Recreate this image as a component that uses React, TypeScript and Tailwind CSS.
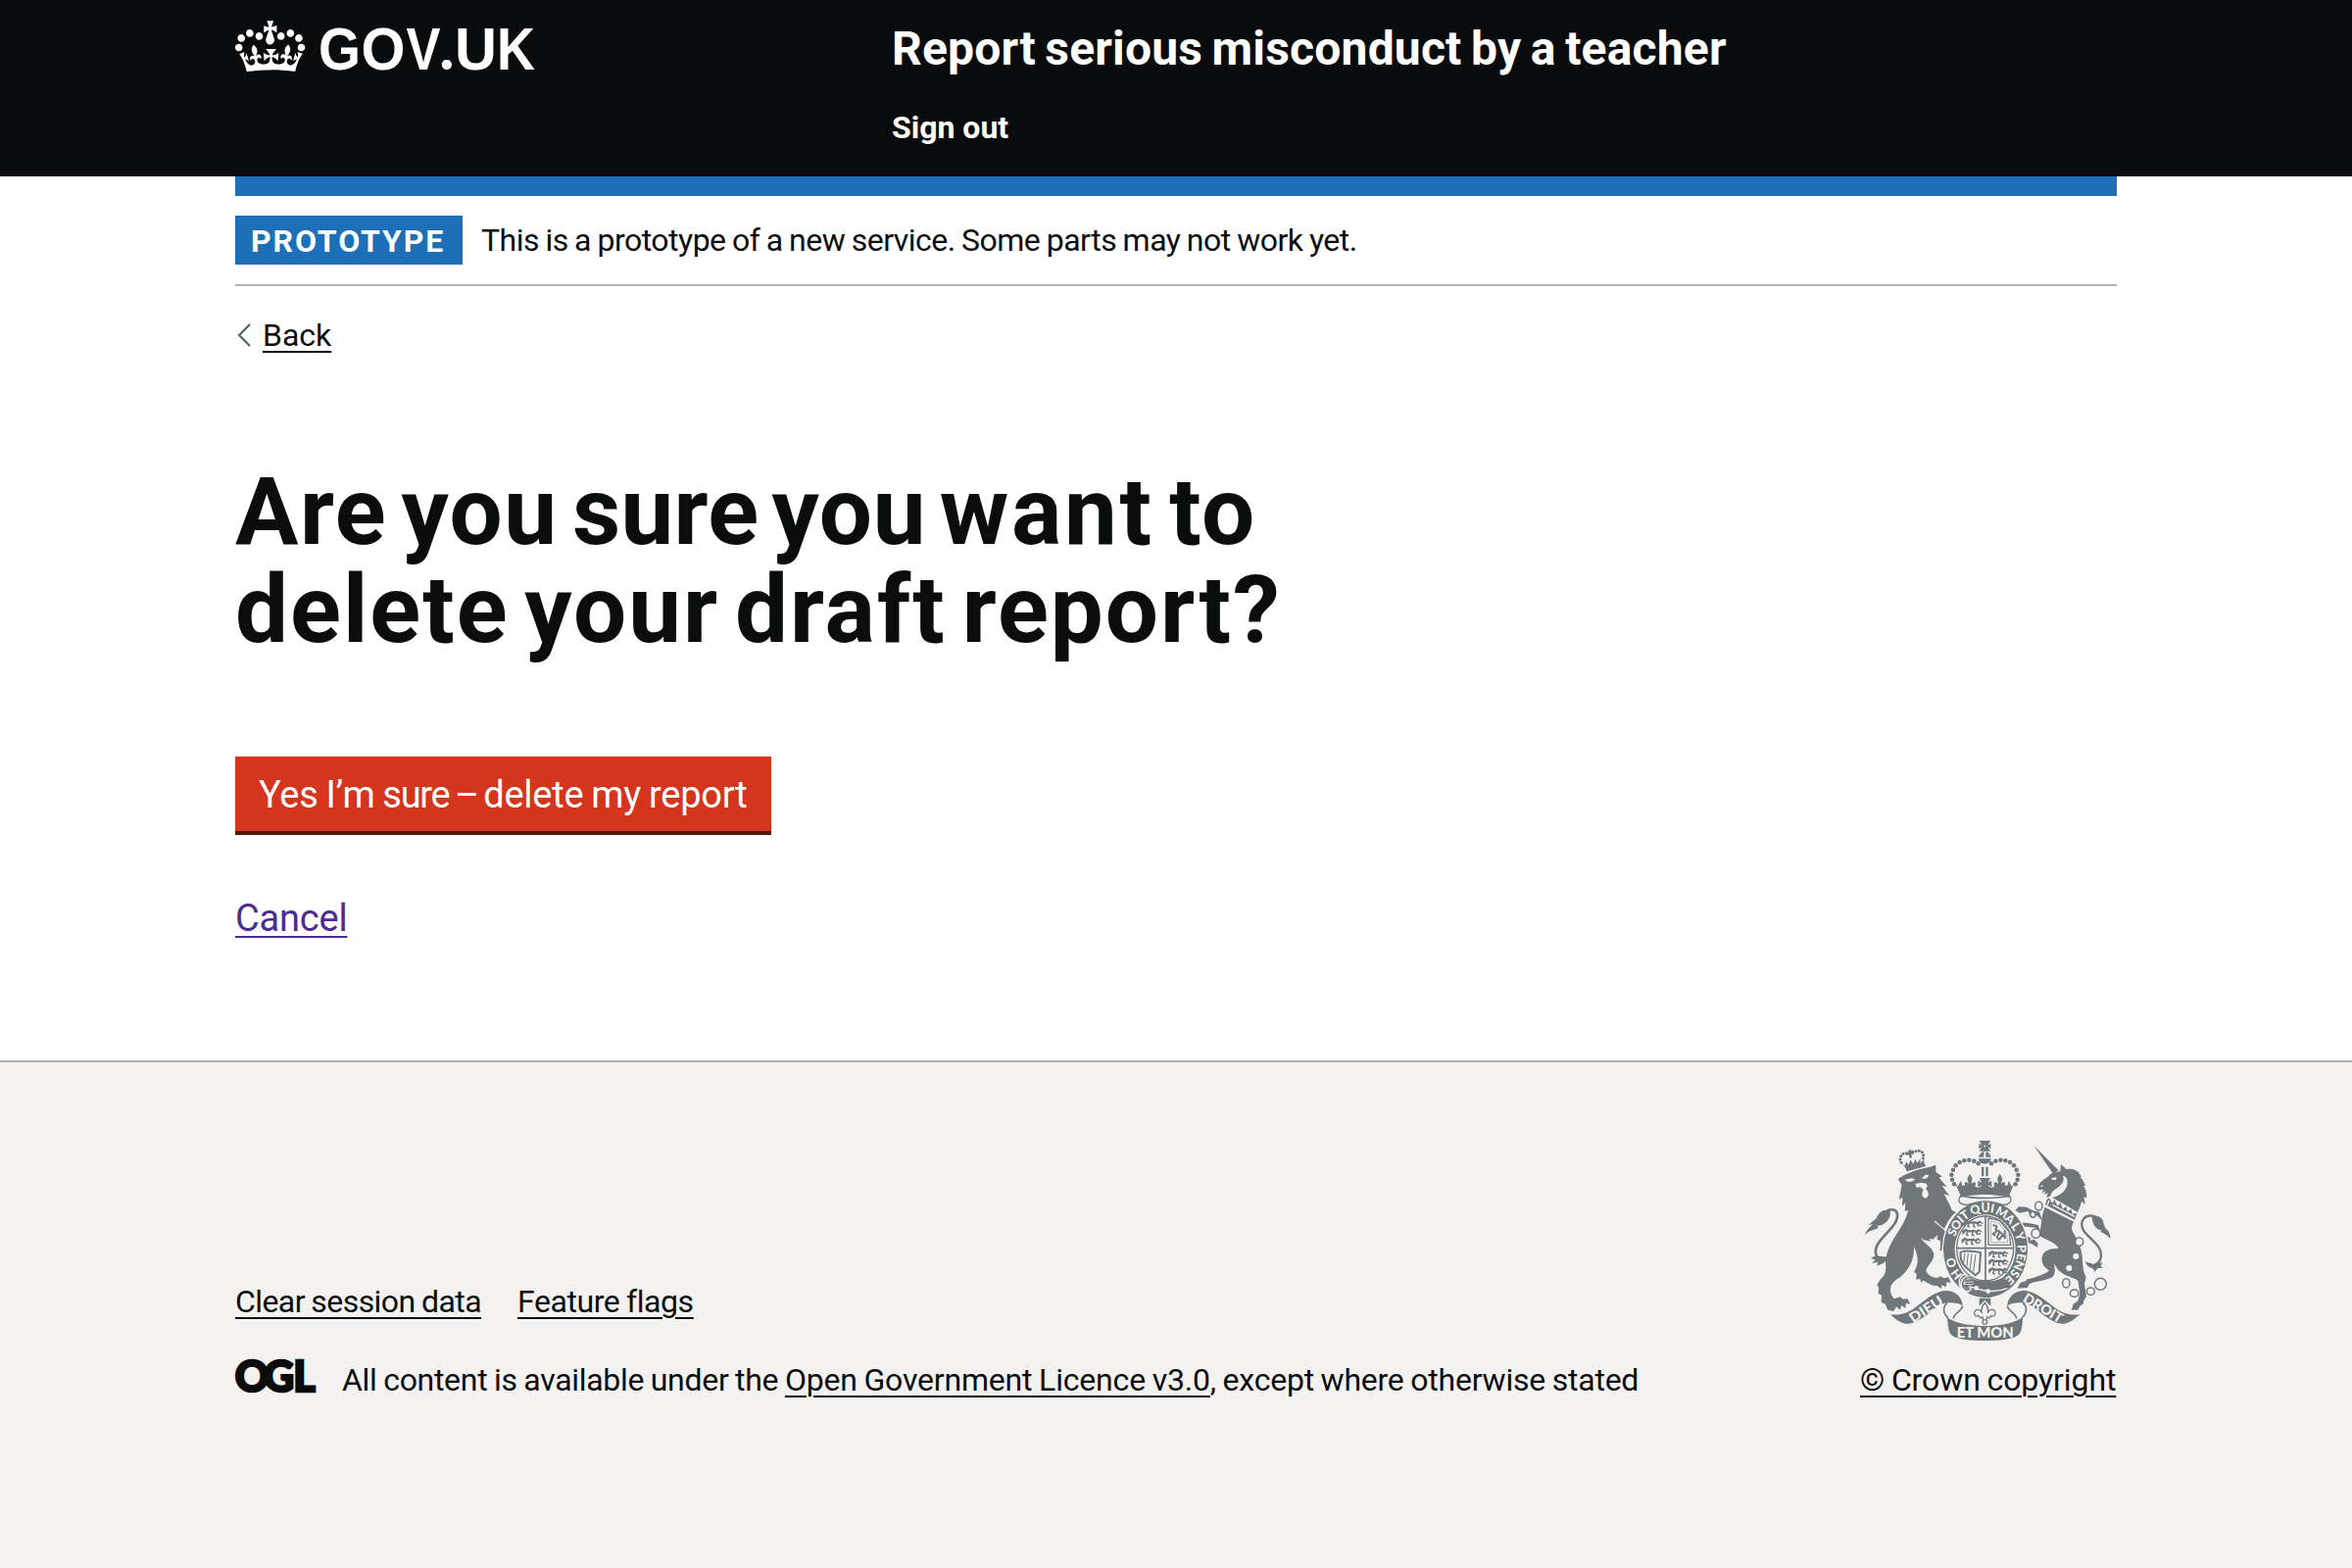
import type { ReactNode } from "react";

const GREY = "#6f777b";
const PALE = "#f3f2f1";

/** Crown and wordmark shown at the left of the header. */
function Logo() {
  return (
    <svg className="block h-[64px] w-[310px] overflow-visible" viewBox="0 0 310 64" fill="white" aria-label="GOV.UK">
      <g transform="scale(2)">
        <path d="M6.7 12.2c1 .4 2.1-.1 2.5-1s-.1-2.1-1-2.5c-1-.4-2.1.1-2.5 1-.4 1 0 2.1 1 2.5m-4.3 2.5c1 .4 2.1-.1 2.5-1s-.1-2.1-1-2.5c-1-.4-2.1.1-2.5 1-.5 1 0 2.1 1 2.5m-1.3 4.8c1 .4 2.1-.1 2.5-1 .4-1-.1-2.1-1-2.5-1-.4-2.1.1-2.5 1-.4 1 0 2.1 1 2.5m10.4-5.8c1 .4 2.1-.1 2.5-1s-.1-2.1-1-2.5c-1-.4-2.1.1-2.5 1s0 2.1 1 2.5m17.4-1.5c-1 .4-2.1-.1-2.5-1s.1-2.1 1-2.5c1-.4 2.1.1 2.5 1 .5 1 0 2.1-1 2.5m4.3 2.5c-1 .4-2.1-.1-2.5-1s.1-2.1 1-2.5c1-.4 2.1.1 2.5 1 .5 1 0 2.1-1 2.5m1.3 4.8c-1 .4-2.1-.1-2.5-1-.4-1 .1-2.1 1-2.5 1-.4 2.1.1 2.5 1 .4 1 0 2.1-1 2.5m-10.4-5.8c-1 .4-2.1-.1-2.5-1s.1-2.1 1-2.5c1-.4 2.1.1 2.5 1s0 2.1-1 2.5m-5.3-4.9 2.4 1.3V6.5l-2.4.8c-.1-.1-.1-.2-.2-.2s1-3 1-3h-3.4l1 3c-.1.1-.2.1-.2.2-.1.1-2.4-.7-2.4-.7v3.5L17 8.8c-.1.1 0 .2.1.3l-1.4 4.2c-.1.2-.1.4-.1.7 0 1.1.8 2.1 1.9 2.2h.6c1.1-.2 1.9-1.1 1.9-2.2 0-.2 0-.4-.1-.7l-1.4-4.2c.2-.1.3-.2.3-.3m-1 20.3c4.6 0 8.9.3 12.8.9 1.1-4.6 2.4-7.2 3.8-9.1l-2.6-.9c.3 1.3.3 1.9 0 2.8-.4-.4-.8-1.2-1.1-2.4l-1.2 4.2c.8-.5 1.4-.9 2-.9-1.2 2.6-2.7 3.2-3.6 3-1.2-.2-1.7-1.3-1.5-2.2.3-1.3 1.6-1.6 2.2-.1 1.2-2.4-.8-3.1-2.1-2.4 1.9-1.9 2.2-3.6.6-5.7-2.2 1.7-2.2 3.3-1.2 5.6-1.3-1.5-3.3-.7-2.5 1.7.9-1.4 2.1-.5 2 .8-.2 1.2-1.7 2.1-3.7 1.9-2.8-.2-2.9-2.2-2.9-3.7.7-.1 1.9.5 3 2l.4-4.4c-1.1 1.2-2.2 1.4-3.3 1.4.4-1.2 2.1-3.1 2.1-3.1h-5.4s1.8 1.9 2.1 3.1c-1.1 0-2.2-.2-3.3-1.4l.4 4.4c1.1-1.5 2.3-2.1 3-2-.1 1.6-.2 3.5-2.9 3.7-2 .2-3.5-.7-3.7-1.9-.1-1.3 1-2.2 1.9-.7.8-2.4-1.2-3.3-2.5-1.7 1-2.3 1-4-1.2-5.6-1.6 2.1-1.3 3.8.6 5.7-1.3-.7-3.3 0-2.1 2.4.6-1.5 1.9-1.1 2.2.1.2.9-.4 1.9-1.5 2.2-1 .2-2.4-.5-3.6-3 .6 0 1.2.4 2 .9l-1.2-4.2c-.3 1.1-.7 1.9-1.1 2.4-.3-.8-.2-1.4 0-2.8l-2.6.9c1.4 1.9 2.7 4.5 3.8 9.1 3.9-.6 8.2-.9 12.8-.9" />
      </g>
      <g fontFamily="Liberation Sans" fontWeight="700" fontSize="61">
        <text x="85" y="58" textLength="43" lengthAdjust="spacingAndGlyphs">G</text>
        <text x="128.500" y="58" textLength="45" lengthAdjust="spacingAndGlyphs">O</text>
        <text x="174.500" y="58" textLength="35" lengthAdjust="spacingAndGlyphs">V</text>
        <text x="208.5" y="58" fontFamily="Lato" fontWeight="900" fontSize="62">.</text>
        <text x="224" y="58" textLength="43" lengthAdjust="spacingAndGlyphs">U</text>
        <text x="267" y="58" textLength="39" lengthAdjust="spacingAndGlyphs">K</text>
      </g>
    </svg>
  );
}

const MOTTO: [string, number][] = [
  ["H", -127], ["O", -109], ["S", -66], ["O", -54], ["I", -43.5], ["T", -35], ["Q", -17], ["U", 0], ["I", 11],
  ["M", 27], ["A", 43], ["L", 57], ["Y", 72], ["P", 89], ["E", 101], ["N", 113], ["S", 126], ["E", 138],
];

const CROWN_BEADS: [number, number][] = [
  [343, 205], [337, 191], [335, 176], [340, 161], [348, 148], [360, 138], [374, 133], [389, 131], [404, 134], [417, 142],
];

const LION_BEADS: [number, number][] = [
  [181, 139], [178, 129], [180, 119], [187, 112], [197, 110], [216, 106], [226, 104], [236, 103], [245, 107], [249, 116], [248, 126],
];

/** Small passant lion used three times in a quarter of the shield. */
function Passant({ x, y }: { x: number; y: number }) {
  return (
    <g transform={`translate(${x} ${y})`}>
      <path d="M2 8l10-7 8 4 18-1 8 3 6-6" strokeWidth="7" />
      <path d="M10 6l-8 8M18 7l-3 9 6 2M34 7l-2 9 6 3M44 7l4 9M50 12l8 2" strokeWidth="4.5" />
      <path d="M50 1c10 0 4 8 12 5" strokeWidth="4" />
    </g>
  );
}

function Ribbon() {
  return (
    <>
      <path
        d="M148 604C180 608 206 598 232 577C268 548 300 524 334 533C356 539 370 560 369 578C362 570 340 567 322 568C300 571 286 584 270 596C244 618 218 634 195 632C178 630 162 618 148 604Z"
        fill={GREY}
      />
      <path d="M322 568C308 580 308 600 324 614M369 578C366 596 340 600 341 617" fill="none" stroke={GREY} strokeWidth="5" />
    </>
  );
}

function Arms() {
  return (
    <svg className="block h-[204px] w-[250px] overflow-visible" viewBox="70 72 750 612" fill={GREY} aria-label="Royal coat of arms">
      {/* lion's crown */}
      {LION_BEADS.map(([x, y]) => <circle key={`${x}-${y}`} cx={x} cy={y} r="4.6" />)}
      <path d="M203 101l9-2-1 8 8-1 1 7-8 1 2 10-7 1-3-10-8 2-1-8 8-2z" />
      <path d="M184 140l9 9 3-14 8 11 5-16 9 13 6-15 7 12 8-13 1 13 10-10 3 20-54 14z" />
      <path d="M195 158l60-15 1 7-58 16z" />
      {/* lion's head, mane and body */}
      <path d="M171 189L190 178C215 163 245 157 270 152L287 146L287 168L306 181L297 186L321 213L306 210L329 241L312 235C322 255 330 266 336 284L349 292C330 310 318 330 312 345L330 365C345 380 350 400 348 420L341 430L334 420L328 432L318 417L306 425L310 408L299 407C303 396 300 388 301 378L291 374L292 361L278 374L266 371L272 380L250 376L240 369C250 386 276 398 281 418C283 440 262 452 257 469C258 480 275 492 292 492L300 487L313 493L326 490L333 507L320 505L318 520L305 514L304 525L290 516C270 516 262 504 246 500L243 508L238 494L227 497L228 479L220 474L226 462C236 440 230 420 220 396C221 440 205 465 180 488C160 500 146 512 148 532C150 545 156 554 160 556L178 550L186 557L200 556L209 572L196 569L194 585L182 576L178 590L166 580L158 594L140 590L132 572L120 566L121 545L111 540L112 522L107 512L118 496C132 484 136 470 133 445C134 410 152 380 175 345C190 322 198 305 202 285L192 288L194 262L184 272L185 246L174 252L183 208Z" />
      <path d="M345 296C330 310 322 325 316 342" fill="none" stroke={PALE} strokeWidth="4" />
      <path d="M283 318C305 338 330 352 338 385" fill="none" stroke={PALE} strokeWidth="3.5" />
      <path d="M192 191C200 200 214 200 224 190L214 187ZM244 186C250 192 262 188 266 178L256 176Z" fill={PALE} />
      <path d="M224 204L243 200L258 203L262 212L256 219C267 230 268 242 256 248C244 246 242 236 249 222L240 214L228 215Z" fill={PALE} />
      {/* lion's tail */}
      <path d="M138 286C176 272 178 308 152 338C126 368 96 392 104 420C107 434 118 438 140 431" fill="none" stroke={GREY} strokeWidth="8" />
      <path d="M71 360C74 342 88 337 93 327L81 331C92 316 104 316 108 302C118 284 136 280 148 288C150 312 130 334 106 332L112 338C100 346 84 344 71 360Z" />
      <path d="M104 424L88 431L102 437L90 446L110 444L106 454C122 452 136 440 146 428L120 426Z" />

      {/* unicorn */}
      <path d="M587 87L663 163L646 173Z" />
      <path d="M600 213C606 194 624 190 634 178C642 168 656 170 668 164L670 144L686 159L700 158C718 160 728 170 733 184L727 182C738 190 740 200 746 210L738 209C746 220 750 230 748 248L740 242L744 266L733 258C730 276 722 284 722 292L686 270L643 246C668 240 690 222 690 200C690 186 684 180 676 180C684 196 668 212 654 220C644 226 640 234 637 242L626 246L630 231L620 238L623 225L612 234L616 221L602 222Z" />
      <path d="M640 187L656 183L655 192L645 192ZM603 212L616 208L614 213Z" fill={PALE} />
      <path d="M627 252L634 247L644 264L650 252L660 272L668 262L676 281L686 272L690 289L702 281L704 296L719 294L712 314L622 268Z" />
      <path d="M634 254L628 270M644 268L712 304" stroke={PALE} strokeWidth="4" fill="none" />
      <path d="M620 275L710 320C700 334 702 344 710 358C722 380 736 404 736 440C738 460 738 474 747 488L742 510L748 548L740 562L738 572L728 578L722 590L702 590L708 572L722 562L728 540L722 500C706 490 680 486 662 468L648 448C652 466 654 476 644 490C620 502 592 502 574 510L567 522L536 524L546 506L562 502L566 496C592 490 612 484 634 470C618 458 606 444 614 422C622 404 644 402 662 402C654 380 622 376 604 362C606 346 610 330 612 306Z" />
      <path d="M614 318L596 300C590 306 580 310 574 300L570 288L544 293L530 286L541 274L564 275L584 286L604 290ZM608 352L592 338L570 336L556 334L553 350L562 364L578 370L574 378L588 374L600 386L598 398L580 388L562 380L556 368L544 352L541 322L570 324L600 330Z" />
      <circle cx="716" cy="426" r="9" fill={PALE} />
      <circle cx="695" cy="462" r="9" fill={PALE} />
      <g fill={PALE} stroke={GREY} strokeWidth="4.5">
        <ellipse cx="602" cy="272" rx="11" ry="13" />
        <ellipse cx="584" cy="298" rx="8" ry="9" />
        <ellipse cx="593" cy="356" rx="13" ry="14" />
        <ellipse cx="726" cy="381" rx="12" ry="13" />
        <ellipse cx="686" cy="508" rx="11" ry="14" />
        <ellipse cx="711" cy="539" rx="13" ry="11" />
        <ellipse cx="761" cy="533" rx="12" ry="11" />
        <circle cx="791" cy="511" r="18" />
      </g>
      <path d="M776 305C742 292 724 320 740 348C760 376 800 396 792 430C788 444 782 450 772 452" fill="none" stroke={GREY} strokeWidth="7" />
      <path d="M764 302C788 298 800 310 801 328L806 340C814 346 822 356 821 372C812 360 800 354 790 350L797 347C776 344 766 328 764 302Z" />
      <path d="M744 442L770 450L797 444L792 456L799 462L784 462L772 474L770 464C758 462 748 454 744 442Z" />

      {/* garter and shield */}
      <ellipse cx="439" cy="404" rx="133" ry="152" fill={PALE} />
      <ellipse cx="439" cy="404" rx="129" ry="148" />
      <ellipse cx="438" cy="404" rx="93" ry="106" fill={PALE} />
      <path d="M372 476C400 508 480 516 510 474L478 515L400 508Z" />
      <ellipse cx="438" cy="402" rx="87" ry="99" fill={PALE} stroke={GREY} strokeWidth="4" />
      <path d="M439 300V504M350 401H526" stroke={GREY} strokeWidth="5" />
      <path d="M420 506L439 496L462 506L439 512Z" />
      <g fill="none" stroke={GREY} strokeLinejoin="round">
        <Passant x={370} y={318} />
        <Passant x={366} y={344} />
        <Passant x={364} y={371} />
        <Passant x={447} y={411} />
        <Passant x={447} y={436} />
        <Passant x={447} y={462} />
        <path d="M448 309L482 316L512 352L516 391H448Z" strokeWidth="4" />
        <path d="M456 318L480 324L504 356L507 383H456Z" strokeWidth="1.5" />
        <path d="M462 330l12 4-4 10 12 6 10 10 8 12M474 348l-12 10 8 4M482 352l-8 16 8 8M490 362l-10 14M496 346c8 8-4 12 4 22" strokeWidth="6" />
        <path d="M362 414C378 404 396 412 424 414L420 474L408 484C396 470 372 462 364 436Z" strokeWidth="6" />
        <path d="M376 416L372 446M386 417L382 456M397 418L392 465M409 420L402 472" strokeWidth="3" />
      </g>
      <g fill={PALE} fontFamily="Lato" fontWeight="900" fontSize="37" textAnchor="middle">
        {MOTTO.map(([ch, deg], i) => (
          <text
            key={i}
            transform={`translate(${439 + 98 * Math.sin((deg * Math.PI) / 180)} ${404 - 114 * Math.cos((deg * Math.PI) / 180)}) rotate(${deg})`}
          >
            {ch}
          </text>
        ))}
      </g>
      {/* garter buckle */}
      <path d="M378 480C350 486 352 534 386 534L398 520C440 536 480 534 506 524" fill="none" stroke={PALE} strokeWidth="4" />
      <path d="M396 492C366 482 356 522 380 530C390 532 394 524 388 518M372 508H402" fill="none" stroke={PALE} strokeWidth="10" />
      <path d="M398 492C372 482 358 518 380 528C388 530 392 524 388 520M376 508H404" fill="none" stroke={GREY} strokeWidth="5" />
      <circle cx="411" cy="523" r="7" fill={PALE} />
      <circle cx="447" cy="533" r="7" fill={PALE} />

      {/* crown above the shield */}
      <path d="M364 240C345 262 372 272 392 266C420 256 456 256 484 266C502 272 528 262 512 240C480 250 394 250 364 240Z" fill={PALE} stroke={GREY} strokeWidth="4" />
      {CROWN_BEADS.map(([x, y]) => (
        <g key={`${x}-${y}`}>
          <circle cx={x} cy={y} r="6.8" />
          <circle cx={874 - x} cy={y} r="6.8" />
        </g>
      ))}
      <path d="M420 72H454L446 86L455 80V97L446 91L454 104H420L428 91L419 97V80L428 86Z" />
      <circle cx="437" cy="88.500" r="3" fill={PALE} />
      <path d="M434 105V122H418C420 114 426 107 434 105ZM440 105V122H456C454 114 448 107 440 105ZM418 127H456C455 138 447 143 437 143C427 143 419 138 418 127Z" />
      <path d="M427 152H434V181H427ZM440 152H447V181H440Z" />
      <path d="M344 196L354 212L364 194L368 210L377 208C370 200 380 194 386 203C388 198 382 192 384 186L391 173L398 186C400 192 394 198 397 204C403 194 414 201 407 210C412 218 424 216 428 208L416 214V194L428 200L420 186H454L446 200L458 194V214L446 208C450 216 462 218 467 210C460 201 471 194 477 204C480 198 474 192 476 186L483 173L490 186C492 192 486 198 488 203C494 194 504 200 497 208L506 210L510 194L520 212L530 196L513 236C480 222 394 222 361 236Z" />
      <path d="M361 232C400 218 474 218 513 232L511 246C474 234 400 234 363 246Z" />

      {/* scroll and fleur-de-lis */}
      <Ribbon />
      <g transform="matrix(-1 0 0 1 875 0)"><Ribbon /></g>
      <path d="M321 612C350 634 400 639 437 639C474 639 524 634 553 612C552 640 550 660 537 668C520 680 478 684 437 684C396 684 354 680 337 668C324 658 326 640 321 612Z" />
      <path d="M420 554H455V578L437 560L420 578Z" />
      <path d="M437 568C450 582 448 592 446 600C450 586 470 584 469 602C466 612 458 610 456 606C456 614 446 616 444 612L441 622H433L430 612C428 616 418 614 418 606C416 610 408 612 405 602C404 584 424 586 428 600C426 592 424 582 437 568Z" fill={PALE} stroke={GREY} strokeWidth="4" />
      <circle cx="437" cy="627" r="7" fill={PALE} stroke={GREY} strokeWidth="4" />
      <g fill={PALE} fontFamily="Lato" fontWeight="900" textAnchor="middle">
        <text x="438" y="676" fontSize="46" textLength="174" lengthAdjust="spacingAndGlyphs">ET MON</text>
        <text transform="translate(265 600) rotate(-33)" fontSize="42" textLength="114" lengthAdjust="spacingAndGlyphs">DIEU</text>
        <text transform="translate(608 597) rotate(31)" fontSize="42" textLength="134" lengthAdjust="spacingAndGlyphs">DROIT</text>
      </g>
    </svg>
  );
}

function OglLogo() {
  return (
    <svg className="block h-[34px] w-[82px] overflow-visible" viewBox="0 0 82 34" fill="#0b0c0c" stroke="#0b0c0c" strokeWidth="2.500" aria-label="OGL">
      <g fontFamily="Lato" fontWeight="900" fontSize="43">
        <text x="-0.200" y="32.300">O</text>
        <text x="29" y="32.300">G</text>
        <text x="59.300" y="32.300">L</text>
      </g>
    </svg>
  );
}

function Link({ children, className = "" }: { children: ReactNode; className?: string }) {
  return <a className={`underline decoration-2 underline-offset-[5px] ${className}`}>{children}</a>;
}

export default function App() {
  return (
    <div className="flex h-[1600px] w-[2400px] flex-col overflow-hidden bg-white font-['Roboto',sans-serif] text-[32px] leading-[40px] text-[#0b0c0c]">
      <header className="flex h-[180px] shrink-0 bg-[#0a0b0c] px-[240px] text-white">
        <div className="w-[670px] pt-[13px]">
          <Logo />
        </div>
        <div className="flex flex-col gap-[30px] pt-5 font-bold">
          <span className="text-[48px] leading-[60px] tracking-[0.18px] [word-spacing:-2.6px]">Report serious misconduct by a teacher</span>
          <span>Sign out</span>
        </div>
      </header>

      <main className="flex flex-1 flex-col items-start px-[240px]">
        <div className="h-5 w-full bg-[#1d70b8]" />
        <div className="flex h-[92px] w-full items-center gap-5 border-b-2 border-[#b1b4b6]">
          <strong className="h-[50px] w-[232px] bg-[#1d70b8] pt-[6px] pl-4 font-bold tracking-[1.9px] text-white">PROTOTYPE</strong>
          <span className="-ml-px tracking-[-0.51px] [word-spacing:-1px]">This is a prototype of a new service. Some parts may not work yet.</span>
        </div>

        <div className="mt-[30px] flex items-center">
          <svg className="h-[24px] w-[28px]" viewBox="0 0 28 24" fill="none" stroke="#505a5f" strokeWidth="2">
            <path d="M15 1L4 12L15 23" />
          </svg>
          <Link>Back</Link>
        </div>

        <h1 className="mt-[110px] text-[96px] leading-[100px] font-bold">
          <span className="block tracking-[1.5px] whitespace-pre [word-spacing:-11px]">
            {"Are you "}
            <span className="tracking-[0.3px]">{"sure "}</span>
            <span className="tracking-[0.7px]">{"you "}</span>
            <span className="tracking-[2.7px]">{"want "}</span>
            to
          </span>
          <span className="block tracking-[2px] [word-spacing:-10px]">delete your draft report?</span>
        </h1>

        <button className="mt-[100px] h-[76px] w-[547px] bg-[#d4351c] pt-5 pb-[18px] pl-6 text-left text-[38px] leading-[38px] whitespace-pre text-white shadow-[0_4px_0_#55150b] [word-spacing:-1.2px]">
          <span className="tracking-[-0.3px]">{"Yes I’m "}</span>
          <span className="tracking-[-1.3px] [word-spacing:-2.5px]">{"sure – "}</span>
          <span className="tracking-[-0.25px]">delete my report</span>
        </button>

        <p className="mt-[64px] text-[38px] leading-[50px] tracking-[-0.2px] text-[#4c2c92]">
          <Link>Cancel</Link>
        </p>
      </main>

      <footer className="flex h-[518px] shrink-0 justify-between border-t-2 border-[#b1b4b6] bg-[#f3f2f1] px-[240px]">
        <div className="flex flex-col gap-10 pt-[224px]">
          <div className="flex gap-[37px] [word-spacing:-1px]">
            <Link className="tracking-[-0.57px]">Clear session data</Link>
            <Link className="tracking-[-0.42px]">Feature flags</Link>
          </div>
          <div className="flex gap-[27px]">
            <OglLogo />
            <p className="whitespace-pre [word-spacing:-1px]">
              <span className="tracking-[-0.3px]">All content is available under the </span>
              <Link className="tracking-[-0.19px]">Open Government Licence v3.0</Link>
              <span className="tracking-[-0.23px]">, except where otherwise stated</span>
            </p>
          </div>
        </div>
        <div className="flex w-[261px] flex-col gap-5 pt-20">
          <div className="pl-[4px]">
            <Arms />
          </div>
          <p className="-ml-px tracking-[-0.1px] whitespace-nowrap [word-spacing:-1px]">
            <Link>© Crown copyright</Link>
          </p>
        </div>
      </footer>
    </div>
  );
}
